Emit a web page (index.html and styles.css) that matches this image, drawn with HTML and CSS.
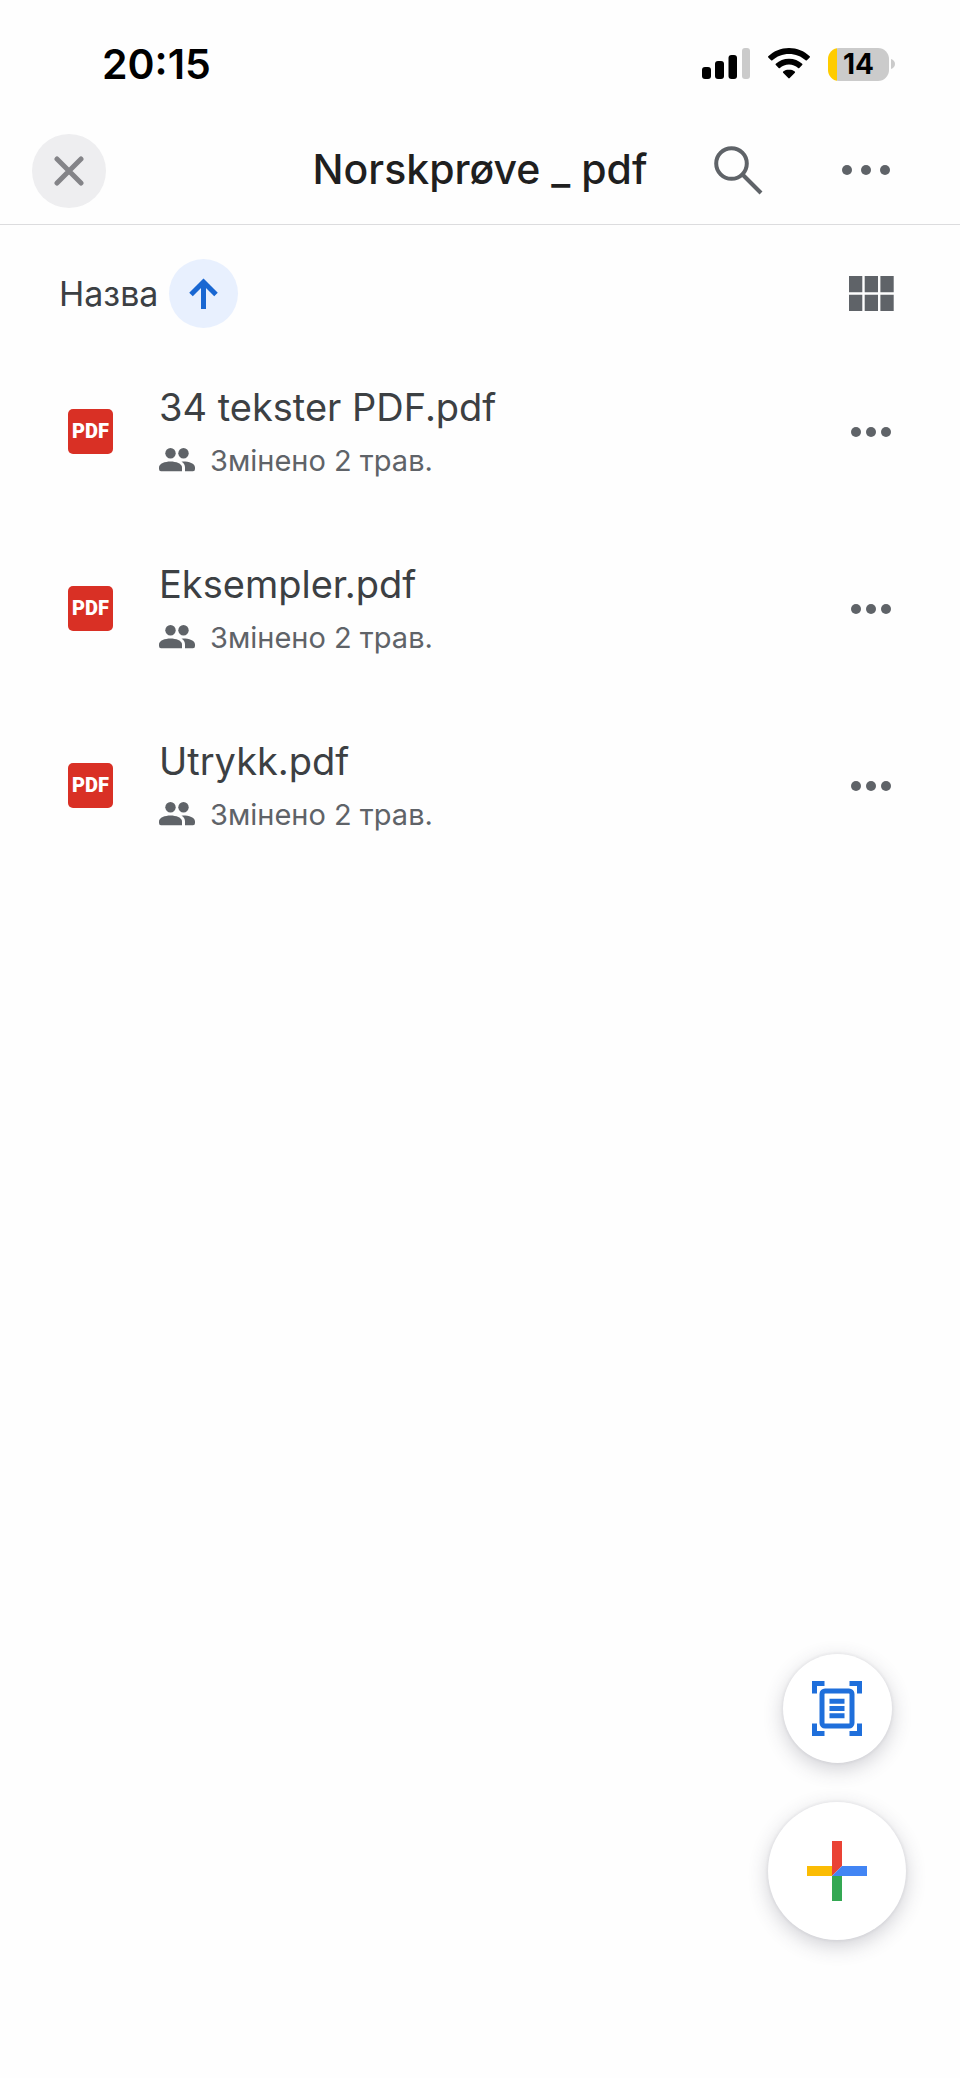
FILE: index.html
```html
<!DOCTYPE html>
<html lang="uk">
<head>
    <meta charset="UTF-8">
    <meta name="viewport" content="width=device-width, initial-scale=1.0">
    <title>Norskprøve _ pdf</title>
    <link rel="stylesheet" href="styles.css">
</head>

<body>
    <div class="status-bar">
        <span class="time">20:15</span>
        <div class="status-icons">
            <svg class="signal" width="48" height="32" viewBox="0 0 48 32" aria-hidden="true">
                <rect x="0" y="19" width="9" height="12" rx="3"/>
                <rect x="13" y="13" width="9" height="18" rx="3"/>
                <rect x="26.500" y="7" width="8.500" height="24" rx="3"/>
                <rect x="40" y="0" width="8" height="31" rx="3" fill="#cbcbcb"/>
            </svg>
            <svg class="wifi" width="42" height="32" viewBox="0 0 42 32" aria-hidden="true">
                <path d="M21 0C13 0 5.700 3.100.3 8.200c-.4.400-.4.900 0 1.300l2.800 2.800c.4.400.9.400 1.300 0C8.700 8.200 14.500 5.900 21 5.900s12.300 2.300 16.600 6.400c.4.400.9.400 1.300 0l2.800-2.800c.4-.4.400-.9 0-1.300C36.300 3.100 29 0 21 0z"/>
                <path d="M21 10.700c-5.100 0-9.700 1.900-13.200 5.100-.4.400-.4.900 0 1.300l2.900 2.900c.4.400.9.300 1.200 0 2.500-2.200 5.600-3.400 9.100-3.400s6.600 1.200 9.100 3.400c.3.300.8.400 1.200 0l2.900-2.900c.4-.4.400-.9 0-1.300-3.500-3.200-8.100-5.100-13.200-5.100z"/>
                <path d="M21 21.500c-2.200 0-4.200.7-5.800 2-.4.300-.4.800-.1 1.200l5.200 5.400c.4.400 1 .400 1.400 0l5.200-5.400c.3-.4.300-.9-.1-1.200-1.600-1.300-3.600-2-5.800-2z"/>
            </svg>
            <div class="battery">
                <span class="battery-level">14</span>
                <svg width="5" height="10" viewBox="0 0 5 10" aria-hidden="true">
                    <path d="M1 0c2.500 1 4 2.500 4 5s-1.500 4-4 5z" fill="#cbcbcb"/>
                </svg>
            </div>
        </div>
    </div>

    <header class="toolbar">
        <button type="button" class="close-btn" aria-label="Закрити">
            <svg width="30" height="30" viewBox="0 0 30 30">
                <path d="M3 3l24 24M27 3L3 27" stroke="#848488" stroke-width="5" stroke-linecap="round"/>
            </svg>
        </button>
        <h1>Norskprøve _ pdf</h1>
        <div class="toolbar-actions">
            <button type="button" aria-label="Пошук">
                <svg width="49" height="49" viewBox="0 0 49 49" fill="none" stroke="#5f6368" stroke-width="4">
                    <circle cx="17.500" cy="17.500" r="15.300"/>
                    <path d="M28.500 28.500L47 47"/>
                </svg>
            </button>
            <button type="button" aria-label="Інші дії">
                <svg width="48" height="10" viewBox="0 0 48 10" fill="#5f6368">
                    <circle cx="5" cy="5" r="5"/>
                    <circle cx="24" cy="5" r="5"/>
                    <circle cx="43" cy="5" r="5"/>
                </svg>
            </button>
        </div>
    </header>

    <main>
        <div class="sort-row">
            <span class="sort-label" id="sort-label">Назва</span>
            <button type="button" class="sort-btn" aria-labelledby="sort-label">
                <svg width="29" height="31" viewBox="0 0 29 31" fill="none" stroke="#1967d2" stroke-width="5">
                    <path d="M14.500 31V4M2 16.500L14.500 4L27 16.500"/>
                </svg>
            </button>
            <button type="button" class="view-btn" aria-label="Сітка">
                <svg width="45" height="35" viewBox="0 0 45 35" fill="#5f6368">
                    <path d="M0 0h13.300v16.300H0zM15.700 0H29v16.300H15.700zM31.400 0h13.300v16.300H31.400zM0 18.700h13.300V35H0zM15.700 18.700H29V35H15.700zM31.400 18.700h13.300V35H31.400z"/>
                </svg>
            </button>
        </div>

        <ul class="file-list">
            <li class="file">
                <span class="pdf-icon">PDF</span>
                <div class="file-info">
                    <h2>34 tekster PDF.pdf</h2>
                    <p>
                        <svg class="people" width="36" height="24" viewBox="0 0 36 24" fill="#5f6368" aria-hidden="true">
                            <circle cx="11.500" cy="5.200" r="5.200"/>
                            <circle cx="24.500" cy="5.200" r="5.200"/>
                            <path d="M0 19.500C0 15.500 6 13.500 11.500 13.500S23 15.500 23 19.500V23.200H2Q0 23.200 0 21z"/>
                            <path d="M24 13.600C30 13.600 36 15.500 36 19.500V21Q36 23.200 34 23.200H26V19.500C26 17 25 15 22.500 13.700z"/>
                        </svg>
                        Змінено 2 трав.
                    </p>
                </div>
                <button type="button" class="more-btn" aria-label="Дії з файлом">
                    <svg width="40" height="10" viewBox="0 0 40 10" fill="#5f6368">
                        <circle cx="5" cy="5" r="5"/>
                        <circle cx="20" cy="5" r="5"/>
                        <circle cx="35" cy="5" r="5"/>
                    </svg>
                </button>
            </li>
            <li class="file">
                <span class="pdf-icon">PDF</span>
                <div class="file-info">
                    <h2>Eksempler.pdf</h2>
                    <p>
                        <svg class="people" width="36" height="24" viewBox="0 0 36 24" fill="#5f6368" aria-hidden="true">
                            <circle cx="11.500" cy="5.200" r="5.200"/>
                            <circle cx="24.500" cy="5.200" r="5.200"/>
                            <path d="M0 19.500C0 15.500 6 13.500 11.500 13.500S23 15.500 23 19.500V23.200H2Q0 23.200 0 21z"/>
                            <path d="M24 13.600C30 13.600 36 15.500 36 19.500V21Q36 23.200 34 23.200H26V19.500C26 17 25 15 22.500 13.700z"/>
                        </svg>
                        Змінено 2 трав.
                    </p>
                </div>
                <button type="button" class="more-btn" aria-label="Дії з файлом">
                    <svg width="40" height="10" viewBox="0 0 40 10" fill="#5f6368">
                        <circle cx="5" cy="5" r="5"/>
                        <circle cx="20" cy="5" r="5"/>
                        <circle cx="35" cy="5" r="5"/>
                    </svg>
                </button>
            </li>
            <li class="file">
                <span class="pdf-icon">PDF</span>
                <div class="file-info">
                    <h2>Utrykk.pdf</h2>
                    <p>
                        <svg class="people" width="36" height="24" viewBox="0 0 36 24" fill="#5f6368" aria-hidden="true">
                            <circle cx="11.500" cy="5.200" r="5.200"/>
                            <circle cx="24.500" cy="5.200" r="5.200"/>
                            <path d="M0 19.500C0 15.500 6 13.500 11.500 13.500S23 15.500 23 19.500V23.200H2Q0 23.200 0 21z"/>
                            <path d="M24 13.600C30 13.600 36 15.500 36 19.500V21Q36 23.200 34 23.200H26V19.500C26 17 25 15 22.500 13.700z"/>
                        </svg>
                        Змінено 2 трав.
                    </p>
                </div>
                <button type="button" class="more-btn" aria-label="Дії з файлом">
                    <svg width="40" height="10" viewBox="0 0 40 10" fill="#5f6368">
                        <circle cx="5" cy="5" r="5"/>
                        <circle cx="20" cy="5" r="5"/>
                        <circle cx="35" cy="5" r="5"/>
                    </svg>
                </button>
            </li>
        </ul>
    </main>

    <div class="fabs">
        <button type="button" class="fab fab-scan" aria-label="Сканувати">
            <svg width="50" height="55" viewBox="0 0 50 55" fill="none" stroke="#1f6fdb" stroke-width="5">
                <path d="M2.500 12.500V2.500H12.500M37.500 2.500H47.500V12.500M47.500 42.500V52.500H37.500M12.500 52.500H2.500V42.500"/>
                <rect x="10" y="10" width="30" height="35" rx="3"/>
                <path d="M17.500 20.200h15M17.500 27.500h15M17.500 34.800h15"/>
            </svg>
        </button>
        <button type="button" class="fab fab-add" aria-label="Створити">
            <svg width="60" height="60" viewBox="0 0 60 60">
                <path d="M25 0H35V25L25 35z" fill="#ea4335"/>
                <path d="M0 25H25V35H0z" fill="#fbbc04"/>
                <path d="M25 35H35V60H25z" fill="#34a853"/>
                <path d="M35 25H60V35H25z" fill="#4285f4"/>
            </svg>
        </button>
    </div>
</body>
</html>
```
FILE: styles.css
```css
/* General Styles */
* {
    margin: 0;
    padding: 0;
    box-sizing: border-box;
}

body {
    min-height: 100vh;
    font-family: Inter, Roboto, Arial, sans-serif;
    background: #fefefe;
    color: #3c4043;
}

button {
    display: flex;
    align-items: center;
    justify-content: center;
    background: none;
    border: none;
    cursor: pointer;
}

svg {
    display: block;
    flex-shrink: 0;
}

/* Status bar */
.status-bar {
    display: flex;
    align-items: center;
    justify-content: space-between;
    height: 118px;
    padding: 10px 65px 0 102px;
    color: #000;
}

.time {
    font-size: 41px;
    font-weight: 600;
}

.status-icons {
    display: flex;
    align-items: center;
    gap: 18px;
}

.battery {
    display: flex;
    align-items: center;
    gap: 1px;
}

.battery-level {
    width: 61px;
    height: 33px;
    border-radius: 11px;
    background: linear-gradient(90deg, #ffcc00 9px, #cbcbcb 9px);
    font-size: 28px;
    font-weight: 700;
    line-height: 33px;
    text-align: center;
}

/* Toolbar */
.toolbar {
    display: grid;
    grid-template-columns: 1fr auto 1fr;
    align-items: center;
    height: 107px;
    padding: 0 70px 0 32px;
    border-bottom: 1px solid #dcdcde;
}

.toolbar h1 {
    padding: 0 0 4px 38px;
    color: #1f1f1f;
    font-size: 41px;
    font-weight: 500;
    white-space: nowrap;
}

.close-btn {
    width: 74px;
    height: 74px;
    border-radius: 50%;
    background: #eeeef0;
}

.toolbar-actions {
    display: flex;
    align-items: center;
    justify-content: flex-end;
    gap: 79px;
    padding-bottom: 2px;
}

/* Sort row */
.sort-row {
    display: flex;
    align-items: center;
    gap: 11px;
    padding: 34px 66px 15px 59px;
}

.sort-label {
    font-size: 34px;
}

.sort-btn {
    width: 69px;
    height: 69px;
    border-radius: 50%;
    background: #e8f0fe;
}

.view-btn {
    margin-left: auto;
}

/* File list */
.file-list {
    list-style: none;
}

.file {
    display: flex;
    align-items: center;
    height: 177px;
    padding: 0 69px 0 68px;
}

.pdf-icon {
    width: 45px;
    height: 45px;
    border-radius: 5px;
    background: #d93025;
    color: #fff;
    font-family: Roboto, Arial, sans-serif;
    font-size: 20px;
    font-weight: 900;
    line-height: 45px;
    text-align: center;
}

.file-info {
    flex: 1;
    min-width: 0;
    padding: 4px 0 0 46px;
}

.file-info h2 {
    font-size: 38px;
    font-weight: 400;
    line-height: 53px;
}

.file-info p {
    display: flex;
    align-items: center;
    gap: 15px;
    color: #5f6368;
    font-size: 29px;
    line-height: 53px;
}

/* Floating buttons */
.fabs {
    position: fixed;
    right: 54px;
    bottom: 138px;
    display: flex;
    flex-direction: column;
    align-items: center;
    gap: 39px;
}

.fab {
    border-radius: 50%;
    background: #fff;
    box-shadow: 0 6px 20px rgba(60, 60, 80, 0.24), 0 0 4px rgba(60, 60, 80, 0.1);
}

.fab-scan {
    width: 109px;
    height: 109px;
}

.fab-add {
    width: 138px;
    height: 138px;
}
```
